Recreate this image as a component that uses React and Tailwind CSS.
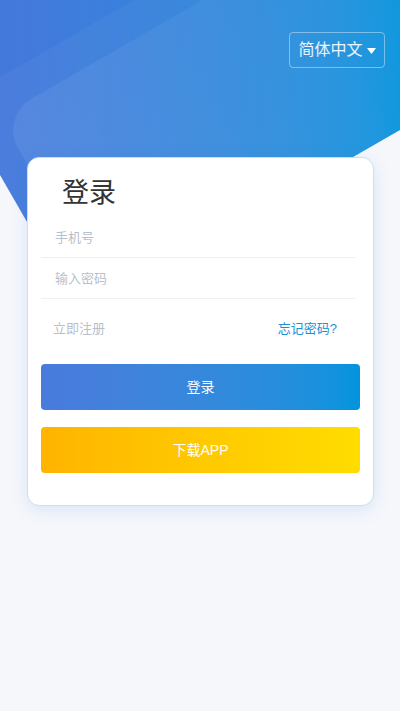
import React from 'react';

const App = () => {
  return (
    <div className="relative min-h-[711px] w-full overflow-hidden bg-[#f6f7fb] font-['Liberation_Sans','Noto_Sans_CJK_SC',sans-serif]">
      {/* header backdrop */}
      <div className="absolute inset-x-0 top-0 h-[330px] overflow-hidden bg-linear-to-r from-[#4478db] to-[#0191dc] [clip-path:polygon(0_0,100%_0,100%_130px,80px_314px,0_175px)]">
        <div className="absolute left-[-100px] top-[135px] h-[520px] w-[760px] origin-top-left -rotate-30 bg-white/[0.035]" />
        <div className="absolute left-0 top-[117px] h-[420px] w-[620px] origin-top-left -rotate-30 rounded-[36px] bg-linear-to-r from-white/[0.07] to-white/0" />
      </div>

      <div className="relative flex flex-col">
        <div className="flex justify-end pr-[15px] pt-[32px]">
          <button className="flex h-[36px] w-[96px] items-center justify-center gap-[4px] rounded-[4px] border border-white/40 text-[16px] text-white/90">
            <span>简体中文</span>
            <svg width="9" height="6" viewBox="0 0 9 6" className="mt-[2px]">
              <path d="M0 0h9L4.5 6z" fill="#fff" />
            </svg>
          </button>
        </div>

        <div className="ml-[27px] mt-[89px] w-[347px] rounded-[12px] border border-[#c8e0f3] bg-white px-[13px] pb-[32px] pt-[17px] shadow-[0_4px_18px_rgba(40,130,220,0.14)]">
          <h1 className="pl-[21px] text-[27px] leading-[36px] text-[#333]">登录</h1>

          <div className="mt-[6px] mr-[5px]">
            <div className="flex h-[41px] items-center border-b border-[#eef0f4] pl-[14px] pt-[2px] text-[13px] text-[#b7bfce]">
              手机号
            </div>
            <div className="flex h-[41px] items-center border-b border-[#eef0f4] pl-[14px] pt-[2px] text-[13px] text-[#b7bfce]">
              输入密码
            </div>
          </div>

          <div className="flex h-[60px] items-center justify-between pl-[12px] pr-[23px] text-[13px]">
            <span className="text-[#b7bfce]">立即注册</span>
            <span className="text-[#1a8fd2]">忘记密码?</span>
          </div>

          <button className="mt-[5px] flex h-[46px] w-full items-center justify-center rounded-[4px] bg-linear-to-r from-[#4a7bdc] to-[#0194dd] text-[14px] text-white">
            登录
          </button>
          <button className="mt-[17px] flex h-[46px] w-full items-center justify-center rounded-[4px] bg-linear-to-r from-[#ffb400] to-[#ffdd00] text-[14px] text-white">
            下载APP
          </button>
        </div>
      </div>
    </div>
  );
};

export default App;
